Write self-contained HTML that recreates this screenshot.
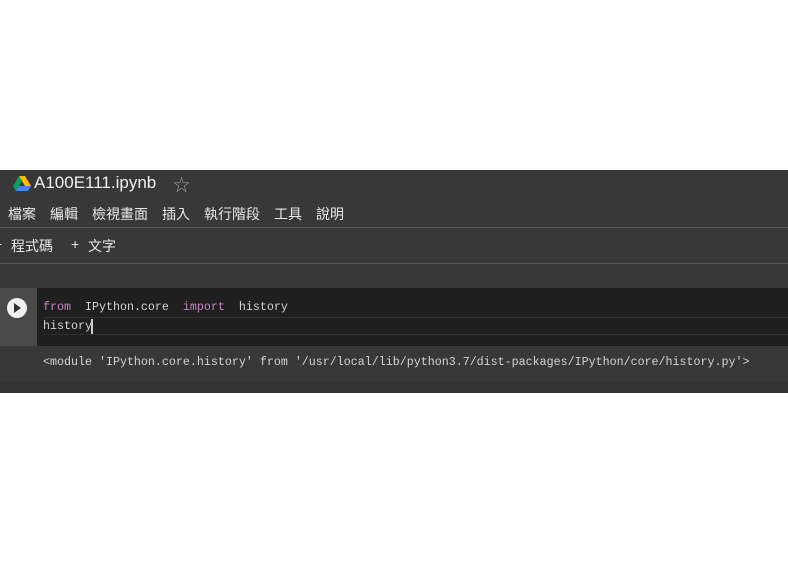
<!DOCTYPE html>
<html><head><meta charset="utf-8"><style>
body{margin:0;width:788px;height:564px;background:#fff;position:relative;overflow:hidden;font-family:"Liberation Sans","Noto Sans CJK TC",sans-serif}
.dark{position:absolute;left:0;top:170px;width:788px;height:223px;background:#383838}
.t{position:absolute;color:#e8e8e8;white-space:pre}
.m{position:absolute;color:#e8e8e8;white-space:pre;top:204px;font-size:14px}
.b{position:absolute;color:#e8e8e8;white-space:pre;top:236px;font-size:14px}
.mono{font-family:"Liberation Mono",monospace;font-size:11.67px;color:#d4d4d4}
.kw{color:#c586c0}
</style></head><body>
<div class="dark"></div>
<svg style="position:absolute;left:13px;top:176px" width="18" height="15" viewBox="0 0 18 15">
<polygon points="6,0 12,0 18,10 15,15 9,5" fill="#fbbc04"/>
<polygon points="6,0 9,5 3,15 0,10" fill="#0f9d58"/>
<polygon points="3,15 6,10 18,10 15,15" fill="#4285f4"/>
</svg>
<div class="t" style="left:34px;top:173px;font-size:17px;color:#f0f0f0">A100E111.ipynb</div>
<div class="t" style="left:173px;top:171px;font-size:17px;color:#9a9a9a">☆</div>
<div class="m" style="left:8px">檔案</div>
<div class="m" style="left:50px">編輯</div>
<div class="m" style="left:92px">檢視畫面</div>
<div class="m" style="left:162px">插入</div>
<div class="m" style="left:204px">執行階段</div>
<div class="m" style="left:274px">工具</div>
<div class="m" style="left:316px">說明</div>
<div style="position:absolute;left:0;top:227px;width:788px;height:1px;background:#5a5a5a"></div>
<div class="b" style="left:-6px">+</div>
<div class="b" style="left:11px">程式碼</div>
<div class="b" style="left:71px">+</div>
<div class="b" style="left:88px">文字</div>
<div style="position:absolute;left:0;top:263px;width:788px;height:1px;background:#5a5a5a"></div>
<div style="position:absolute;left:0;top:288px;width:37px;height:58px;background:#4a4a4a"></div>
<div style="position:absolute;left:37px;top:288px;width:751px;height:58px;background:#1f1f1f"></div>
<div style="position:absolute;left:43px;top:317px;width:745px;height:1px;background:#2e2e2e"></div>
<div style="position:absolute;left:43px;top:334px;width:745px;height:1px;background:#2e2e2e"></div>
<div style="position:absolute;left:7px;top:298px;width:20px;height:20px;border-radius:50%;background:#f0f0f0"></div>
<div style="position:absolute;left:14px;top:303px;width:0;height:0;border-left:7px solid #333;border-top:5px solid transparent;border-bottom:5px solid transparent"></div>
<div class="t mono" style="left:43px;top:300px"><span class="kw">from</span>  IPython.core  <span class="kw">import</span>  history</div>
<div class="t mono" style="left:43px;top:319px">history</div>
<div style="position:absolute;left:91px;top:319px;width:2px;height:15px;background:#ccc"></div>
<div style="position:absolute;left:0;top:381px;width:788px;height:12px;background:#333"></div>
<div class="t mono" style="left:43px;top:355px">&lt;module 'IPython.core.history' from '/usr/local/lib/python3.7/dist-packages/IPython/core/history.py'&gt;</div>
</body></html>
